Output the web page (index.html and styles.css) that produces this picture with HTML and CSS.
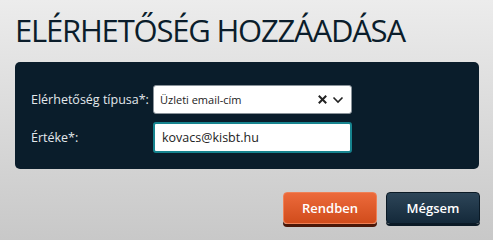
FILE: index.html
```html
<!DOCTYPE html>
<html lang="hu">
<head>
<meta charset="utf-8">
<link rel="stylesheet" href="styles.css">
</head>
<body>
<h1 class="title">ELÉRHETŐSÉG HOZZÁADÁSA</h1>
<div class="panel">
  <div class="row">
    <label class="label">Elérhetőség típusa*:</label>
    <div class="select">
      <span class="select-text">Üzleti email-cím</span>
      <span class="select-icons">
        <svg class="ico-x" width="9" height="9" viewBox="0 0 9 9"><path d="M1.5 1.5 L7.5 7.5 M7.5 1.5 L1.5 7.5" stroke="#222" stroke-width="2" stroke-linecap="square"/></svg>
        <svg class="ico-chev" width="12" height="8" viewBox="0 0 12 8"><path d="M1.5 1.5 L6 6 L10.5 1.5" stroke="#222" stroke-width="1.6" fill="none"/></svg>
      </span>
    </div>
  </div>
  <div class="row">
    <label class="label">Értéke*:</label>
    <div class="input">kovacs@kisbt.hu</div>
  </div>
</div>
<div class="actions">
  <button class="btn btn-ok">Rendben</button>
  <button class="btn btn-cancel">Mégsem</button>
</div>
</body>
</html>
```
FILE: styles.css
```css
html, body { height: 100%; }
body {
  margin: 0;
  background: linear-gradient(#ececec, #c8c8c8);
  font-family: "Open Sans", "DejaVu Sans", sans-serif;
  overflow: hidden;
}
.title {
  margin: 0;
  padding: 10px 0 0 15px;
  height: 62px;
  box-sizing: border-box;
  font-family: "Open Sans", sans-serif;
  font-weight: 400;
  font-size: 31px;
  letter-spacing: -1.2px;
  line-height: 40px;
  color: #0b1d2b;
}
.panel {
  margin: 0 14px 0 15px;
  background: #0a1d2b;
  border-radius: 5px;
  padding: 23px 0 16px 16px;
  display: flex;
  flex-direction: column;
  gap: 8px;
}
.row {
  display: flex;
  align-items: center;
}
.label {
  width: 122px;
  white-space: nowrap;
  color: #e3e8ec;
  font-size: 12.5px;
}
.select {
  box-sizing: border-box;
  width: 199px;
  height: 29px;
  background: #fff;
  border: 1px solid #8a939a;
  border-radius: 3px;
  display: flex;
  align-items: center;
  justify-content: space-between;
  padding: 0 7px 0 6px;
  font-size: 11px;
  color: #222;
}
.select-icons { display: flex; align-items: center; gap: 5px; }
.input {
  box-sizing: border-box;
  width: 199px;
  height: 31px;
  background: #fff;
  border: 2px solid #17848f;
  border-radius: 3px;
  display: flex;
  align-items: center;
  padding: 0 7px;
  font-size: 12.5px;
  color: #222;
}
.actions {
  display: flex;
  justify-content: flex-end;
  gap: 9px;
  padding: 23px 13px 0 0;
}
.btn {
  width: 94px;
  height: 32px;
  border-radius: 4px;
  font-family: "Open Sans", sans-serif;
  font-weight: 600;
  font-size: 13px;
  color: #fff;
  cursor: pointer;
}
.btn-ok {
  background: linear-gradient(#ec6a3b, #d14c1c);
  border: 1px solid #f08055;
  box-shadow: 0 3px 0 #4a1708;
}
.btn-cancel {
  background: linear-gradient(#2d4558, #14293a);
  border: 1px solid #0b1a26;
  box-shadow: 0 2px 0 #0b1a26;
}
```
